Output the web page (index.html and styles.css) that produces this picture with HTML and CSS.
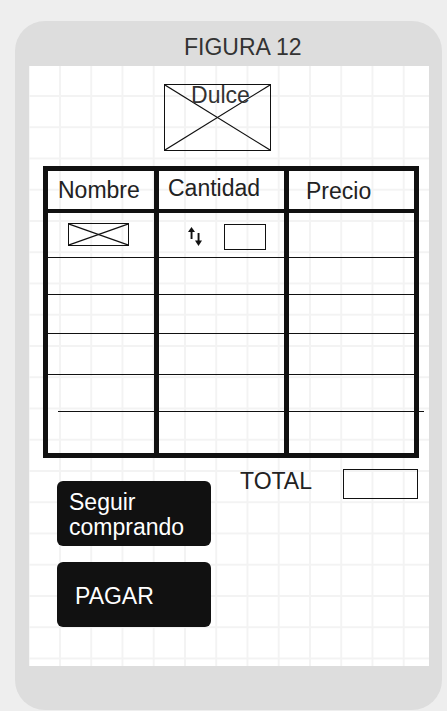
FILE: index.html
```html
<!DOCTYPE html>
<html lang="es">
<head>
<meta charset="utf-8">
<title>Figura 12</title>
<link rel="stylesheet" href="styles.css">
</head>
<body>
<div class="frame">
  <div class="frame-head"><span class="title">FIGURA 12</span></div>
  <div class="canvas">
    <div class="product">
      <svg class="xmark" viewBox="0 0 100 100" preserveAspectRatio="none"><line x1="0" y1="0" x2="100" y2="100"/><line x1="100" y1="0" x2="0" y2="100"/></svg>
      <span class="product-name">Dulce</span>
    </div>

    <div class="cart">
      <div class="cart-head">
        <div class="th th-name">Nombre</div>
        <div class="th th-qty">Cantidad</div>
        <div class="th th-price">Precio</div>
      </div>
      <div class="cart-head-bar"></div>

      <div class="tr r1">
        <div class="td td-name">
          <div class="thumb"><svg class="thumb-x" viewBox="0 0 100 100" preserveAspectRatio="none"><line x1="0" y1="0" x2="100" y2="100"/><line x1="100" y1="0" x2="0" y2="100"/></svg></div>
        </div>
        <div class="td td-qty">
          <svg class="sort-icon" width="15" height="19" viewBox="0 0 15 19"><rect x="2.6" y="3" width="1.9" height="9"/><polygon points="0,5 3.5,0 7,5"/><rect x="9.6" y="6" width="1.9" height="9"/><polygon points="7,13.5 10.5,19 14,13.5"/></svg>
          <div class="qty-box"></div>
        </div>
        <div class="td"></div>
      </div>
      <div class="rule"></div>
      <div class="tr r2"><div class="td"></div><div class="td"></div><div class="td"></div></div>
      <div class="rule"></div>
      <div class="tr r3"><div class="td"></div><div class="td"></div><div class="td"></div></div>
      <div class="rule"></div>
      <div class="tr r4"><div class="td"></div><div class="td"></div><div class="td"></div></div>
      <div class="rule"></div>
      <div class="tr r5"><div class="td"></div><div class="td"></div><div class="td"></div></div>
      <div class="rule rule-offset"></div>
      <div class="tr r6"><div class="td"></div><div class="td"></div><div class="td"></div></div>
    </div>

    <div class="checkout">
      <div class="actions">
        <div class="btn btn-continue">Seguir<br>comprando</div>
        <div class="btn btn-pay">PAGAR</div>
      </div>
      <div class="total">
        <span class="total-label">TOTAL</span>
        <div class="total-box"></div>
      </div>
    </div>
  </div>
</div>
</body>
</html>
```

FILE: styles.css
```css
* { box-sizing: border-box; }

html, body {
  margin: 0;
  padding: 0;
}

body {
  background: #eeeeee;
  font-family: "Liberation Sans", Arial, sans-serif;
  font-size: 23px;
  line-height: 25px;
  color: #222;
  width: 447px;
  height: 711px;
  overflow: hidden;
}

.frame {
  margin: 21px 0 0 15px;
  width: 427px;
  height: 689px;
  background: #dddddd;
  border-radius: 30px;
  padding: 0 13px 44px 14px;
  display: flex;
  flex-direction: column;
}

.frame-head {
  height: 45px;
  padding: 14px 0 0 155px;
  flex: none;
}

.title {
  color: #333;
  white-space: nowrap;
}

.canvas {
  width: 400px;
  height: 600px;
  background-color: #fff;
  background-image:
    linear-gradient(to right, #f3f3f3 2px, transparent 2px),
    linear-gradient(to bottom, #f3f3f3 2px, transparent 2px);
  background-size: 31.25px 31.25px;
  background-position: 30px 29px;
  display: flex;
  flex-direction: column;
  align-items: flex-start;
}

/* product placeholder */
.product {
  position: relative;
  margin: 18px 0 0 135px;
  width: 107px;
  height: 67px;
  border: 1px solid #111;
  display: flex;
  justify-content: center;
  padding-left: 6px;
}

.xmark, .thumb-x {
  display: block;
  width: 100%;
  height: 100%;
}

.xmark {
  position: absolute;
  inset: 0;
}

.xmark line, .thumb-x line {
  stroke: #111;
  stroke-width: 1.2;
  vector-effect: non-scaling-stroke;
}

.product-name {
  position: relative;
  line-height: 20px;
  color: #333;
}

/* cart table */
.cart {
  margin: 15px 0 0 14px;
  width: 376px;
  border: 5px solid #111;
  display: flex;
  flex-direction: column;
}

.cart-head, .tr {
  display: grid;
  grid-template-columns: 106px 130px 130px;
}

.cart-head { height: 38px; }

.th {
  white-space: nowrap;
  color: #222;
}

.th + .th, .td + .td { border-left: 5px solid #111; }

.th-name { padding: 7px 0 0 10px; }
.th-qty { padding: 5px 0 0 9px; }
.th-price { padding: 8px 0 0 17px; }

.cart-head-bar {
  height: 4px;
  background: #111;
}

.rule {
  height: 1px;
  background: #111;
}

.rule-offset {
  margin: 0 -10px 0 10px;
}

.r1 { height: 44px; }
.r2 { height: 36px; }
.r3 { height: 38px; }
.r4 { height: 40px; }
.r5 { height: 36px; }
.r6 { height: 41px; }

.td-name { padding: 10px 0 0 20px; }

.thumb {
  width: 61px;
  height: 23px;
  border: 1px solid #111;
}

.td-qty {
  display: flex;
  align-items: flex-start;
  padding: 11px 0 0 29px;
  gap: 21px;
}

.sort-icon {
  display: block;
  margin-top: 3px;
  fill: #111;
}

.qty-box {
  width: 42px;
  height: 26px;
  border: 1px solid #111;
}

/* checkout */
.checkout {
  display: flex;
  margin-left: 28px;
}

.actions {
  margin-top: 23px;
  width: 154px;
  display: flex;
  flex-direction: column;
  gap: 16px;
}

.btn {
  height: 65px;
  background: #111;
  color: #fff;
  border-radius: 6px;
  white-space: nowrap;
}

.btn-continue { padding: 9px 0 0 12px; }
.btn-pay { padding: 22px 0 0 18px; }

.total {
  margin: 11px 0 0 29px;
  display: flex;
  align-items: flex-start;
  gap: 31px;
}

.total-label {
  color: #222;
}

.total-box {
  width: 75px;
  height: 30px;
  border: 1px solid #111;
}
```
